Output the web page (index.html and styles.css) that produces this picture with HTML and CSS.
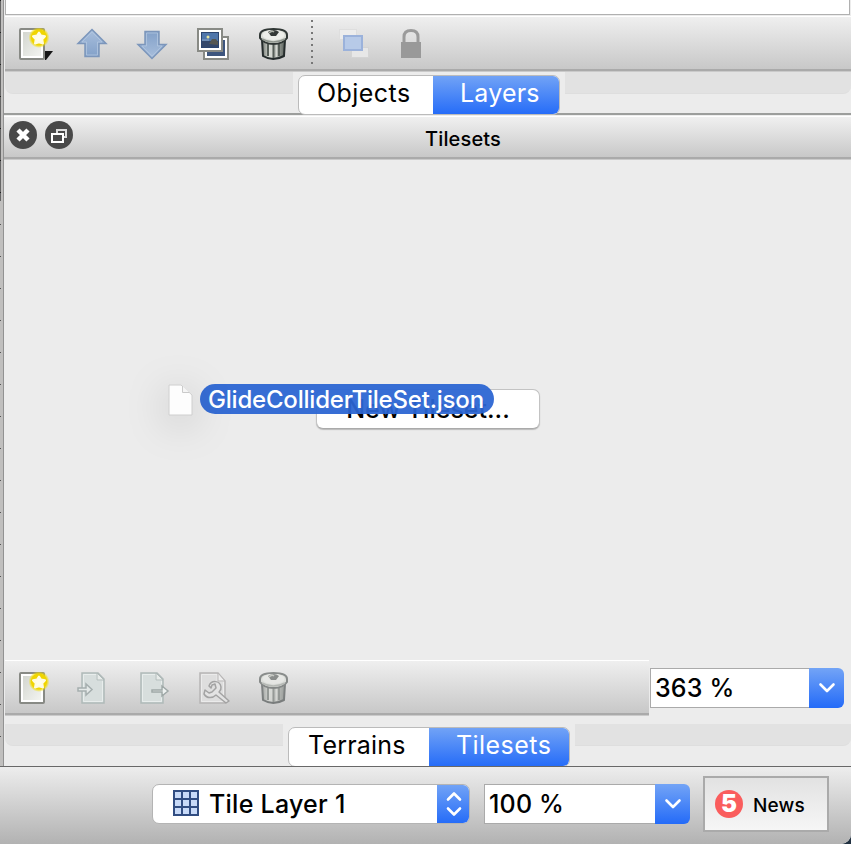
FILE: index.html
```html
<!DOCTYPE html>
<html lang="en">
<head>
<meta charset="utf-8">
<title>Tilesets</title>
<link rel="stylesheet" href="styles.css">
</head>
<body>
<svg width="0" height="0" class="defs">
  <defs>
    <linearGradient id="paper" x1="0" y1="0" x2="1" y2="1"><stop offset="0" stop-color="#cfd2cb"/><stop offset="1" stop-color="#f7f8f5"/></linearGradient>
    <linearGradient id="blue" x1="0" y1="0" x2="0" y2="1"><stop offset="0" stop-color="#a9bfdc"/><stop offset="1" stop-color="#83a1c9"/></linearGradient>
    <linearGradient id="can" x1="0" y1="0" x2="1" y2="0"><stop offset="0" stop-color="#727872"/><stop offset=".35" stop-color="#e2e5df"/><stop offset="1" stop-color="#5d645e"/></linearGradient>
    <radialGradient id="glow"><stop offset=".72" stop-color="#f0d500"/><stop offset="1" stop-color="#f6e400" stop-opacity="0"/></radialGradient>
    <symbol id="new" viewBox="0 0 32 32">
      <rect x="1" y="1" width="24" height="30" rx="1" fill="url(#paper)" stroke="#888a85" stroke-width="2"/>
      <rect x="3" y="3" width="20" height="26" fill="none" stroke="#fff" stroke-width="2"/>
      <circle cx="20" cy="9.500" r="10.500" fill="url(#glow)"/>
      <path d="M20 4.500l2 3 4 .8-2.700 3 .7 4.200-4-1.300-4 1.300.7-4.200-2.700-3 4-.8z" fill="#fffdec" stroke="#fffce0" stroke-width="2" stroke-linejoin="round"/>
    </symbol>
    <symbol id="arrow" viewBox="0 0 32 32">
      <path d="M16 1.500L30 15.500H23V28.500H9V15.500H2z" fill="url(#blue)" stroke="#7c96bb" stroke-width="1.500"/>
      <path d="M16 4L26 14H21.500V27H10.500V14H6z" fill="none" stroke="#b3c6df" stroke-width=".8"/>
    </symbol>
    <symbol id="images" viewBox="0 0 32 32">
      <path d="M7 9H31V31H7z" fill="#fff" stroke="#888a85" stroke-width="2"/>
      <path d="M10 12H28V28H10z" fill="#3e567e"/>
      <rect x="1" y="1" width="24" height="22" fill="#fff" stroke="#888a85" stroke-width="2"/>
      <rect x="4.500" y="4.500" width="17" height="15" fill="#4f76ab" stroke="#2c4570"/>
      <path d="M5 13H21V19H5z" fill="#33476b"/><circle cx="11" cy="9" r="1.500" fill="#e7e6a0"/><path d="M12 16l3-5h4l2 3v3z" fill="#555753"/><path d="M5 12h7" stroke="#8ea5c4"/>
    </symbol>
    <symbol id="trash" viewBox="0 0 32 34">
      <path d="M4 13L5 29Q15 35 26 29L27 13z" fill="url(#can)" stroke="#252c2c" stroke-width="2"/>
      <path d="M10 17v12M15.500 18v13M21 17v12" stroke="#555d57" stroke-width="2"/><path d="M12.500 17v13M18.500 17v13" stroke="#d5d9d2" stroke-width="1.500"/>
      <path d="M2 8Q2 2 15.500 2Q29 2 29 8V11Q25 17 15.500 17Q6 17 2 11z" fill="#d9ddd6" stroke="#303735" stroke-width="2"/>
      <ellipse cx="15.500" cy="8" rx="11" ry="5" fill="#eceee9"/><path d="M4 12Q15 18 27 12" fill="none" stroke="#8f968e" stroke-width="1.500"/>
      <path d="M10 5Q16 1 21 5L18 9H13z" fill="#343a37"/><path d="M11 6q3-3 5-1" fill="none" stroke="#adb2a8" stroke-width="1.500"/>
    </symbol>
    <symbol id="duplicate" viewBox="0 0 32 32">
      <rect x="1.500" y="1.500" width="17" height="10" fill="#ededed" stroke="#dedede"/><rect x="13.500" y="19.500" width="17" height="10" fill="#e7e7e7" stroke="#d4d4d4"/>
      <rect x="6" y="8" width="18" height="14" fill="#b7cae8" stroke="#9bb2db" stroke-width="2"/>
    </symbol>
    <symbol id="lock" viewBox="0 0 22 30"><path d="M4 14V8Q4 1.500 11 1.500T18 8v6" fill="none" stroke="#9b9b9b" stroke-width="3"/><path d="M1 13h20v16H1z" fill="#999"/></symbol>
    <symbol id="doc" viewBox="0 0 24 32"><path d="M1 1H17L23 7V31H1z" fill="#d7dedd" stroke="#b0bab9" stroke-width="1.500"/><path d="M2.500 2.500H16V8H21.500V29.500H2.500z" fill="none" stroke="#e8edec"/><path d="M16 1v7h7z" fill="#e8ecea" stroke="#b0bab9"/></symbol>
  </defs>
</svg>
<div class="window">
  <div class="upper">
    <div class="canvas-edge"><div class="edge-dark"></div><div class="edge-ticks"></div></div>
    <main class="dock">
      <div class="list-end"></div>
      <div class="toolbar layers-tools">
        <svg class="new-icon" width="32" height="32"><use href="#new"/></svg>
        <svg class="up" width="32" height="32"><use href="#arrow"/></svg>
        <svg class="down" width="32" height="32"><use href="#arrow"/></svg>
        <svg class="images" width="32" height="32"><use href="#images"/></svg>
        <svg class="trash" width="32" height="34"><use href="#trash"/></svg>
        <div class="separator"></div>
        <svg class="duplicate" width="32" height="32"><use href="#duplicate"/></svg>
        <svg class="lock" width="22" height="30"><use href="#lock"/></svg>
        <svg class="drop-mark" width="9" height="10"><path d="M0 0H8L1 9H0z" fill="#171717"/></svg>
      </div>
      <nav class="tabs top-tabs">
        <div class="rail left"></div>
        <div class="segments"><div class="tab objects"><span>Objects</span></div><div class="tab active layers"><span>Layers</span></div></div>
        <div class="rail right"></div>
      </nav>
      <header class="title">
        <svg width="66" height="30" viewBox="0 0 66 30">
          <circle cx="15" cy="15" r="14" fill="#494949"/><path d="M10 10l10 10m0-10l-10 10" stroke="#fff" stroke-width="4.500"/>
          <circle cx="51" cy="15" r="14" fill="#494949"/><rect x="49" y="10" width="9" height="7" fill="#494949" stroke="#ddd" stroke-width="2"/><rect x="44" y="14" width="11" height="8" fill="#494949" stroke="#fff" stroke-width="2"/>
        </svg>
        <h1><span>Tilesets</span></h1>
      </header>
      <section class="empty">
        <button class="new-tileset"><span>New Tileset...</span></button>
        <div class="drag">
          <svg width="26" height="32" viewBox="0 0 26 32"><path d="M1 1H13L24 11V31H1z" fill="#fdfdfd" stroke="#cecece"/><path d="M14.500 2v6.500h7" fill="#f5f5f5" stroke="#cacaca"/></svg>
          <div class="filename"><span>GlideColliderTileSet.json</span></div>
        </div>
      </section>
      <div class="tools-row">
        <div class="toolbar tile-tools">
          <svg class="new-icon" width="32" height="32"><use href="#new"/></svg>
          <svg class="import" width="32" height="32" viewBox="0 0 32 32"><use href="#doc" x="4" width="24" height="32"/><path d="M1 16h8v-4l6 5.500-6 5.500v-4H1z" fill="#e4e9e8" stroke="#a5aeae" stroke-width="1.500"/></svg>
          <svg class="export" width="32" height="32" viewBox="0 0 32 32"><use href="#doc" width="24" height="32"/><path d="M12 18h10v-4l6 5-6 5v-4H12z" fill="#eef2f1" stroke="#9fa8a7" stroke-width="1.500"/></svg>
          <svg class="wrench" width="32" height="32" viewBox="0 0 32 32"><path d="M1 1H19L26 9V31H1z" fill="#dedede" stroke="#b7b5b5" stroke-width="1.500"/><path d="M2.500 2.500H18V9H24.500V29.500H2.500z" fill="none" stroke="#ebebeb"/><path d="M19 1v8h7z" fill="#eee" stroke="#b7b5b5"/><path d="M10 14c2-6 11-6 12 1 .4 3-1 4-2 5l10 9-3 2-10-8c-3 3-9 4-12-1l1-4 4 3 3-1 4-4-1-4-3 1-1 3z" fill="#e3e3e3" stroke="#a3a3a3" stroke-width="1.500" stroke-linejoin="round"/></svg>
          <svg class="trash dim" width="32" height="34"><use href="#trash"/></svg>
        </div>
        <div class="combo tileset-zoom"><div class="value"><span>363 %</span></div><div class="combo-button"><svg width="18" height="12" viewBox="0 0 18 12"><path d="M2.500 2.500L9 9l6.500-6.500"/></svg></div></div>
      </div>
      <nav class="tabs bottom-tabs">
        <div class="rail left"></div>
        <div class="segments"><div class="tab terrains"><span>Terrains</span></div><div class="tab active tilesets"><span>Tilesets</span></div></div>
        <div class="rail right"></div>
      </nav>
    </main>
  </div>
  <footer class="status">
    <div class="layer-select">
      <svg class="grid-icon" width="26" height="26"><path d="M0 0h26v26H0z" fill="#314d82"/><path d="M2 2h6v6H2zM10 2h6v6h-6zM18 2h6v6h-6zM2 10h6v6H2zM10 10h6v6h-6zM18 10h6v6h-6zM2 18h6v6H2zM10 18h6v6h-6zM18 18h6v6h-6z" fill="#c8daf8"/></svg>
      <div class="layer-name"><span>Tile Layer 1</span></div>
      <div class="stepper"><svg width="18" height="26" viewBox="0 0 18 26"><path d="M3 8.500L9 2.500l6 6M3 17.500l6 6 6-6"/></svg></div>
    </div>
    <div class="combo map-zoom"><div class="value"><span>100 %</span></div><div class="combo-button"><svg width="18" height="12" viewBox="0 0 18 12"><path d="M2.500 2.500L9 9l6.500-6.500"/></svg></div></div>
    <button class="news"><b class="badge-count">5</b><span>News</span></button>
  </footer>
</div>
</body>
</html>
```
FILE: styles.css
```css
* { box-sizing: border-box; }
body { margin: 0; overflow: hidden; font-family: Inter, "Liberation Sans", sans-serif; color: #000; background: #203040; }
.defs { position: absolute; }
svg { display: block; flex: none; }
span { white-space: nowrap; }
.window { width: 851px; height: 844px; background: #ececec; border-bottom-right-radius: 10px; overflow: hidden; }
.upper { display: flex; height: 766px; }
.canvas-edge { width: 4px; flex: none; background: linear-gradient(90deg, #c0bfbe 3px, #929292 3px); }
.edge-dark { width: 1px; height: 201px; background: repeating-linear-gradient(#666 0 32px, #222 32px 33px); background: linear-gradient(#222 1px, #666 1px) 0 0 / 1px 32px; }
.edge-ticks { width: 1px; height: 565px; background: linear-gradient(transparent 23px, #555 23px 24px, transparent 24px) 0 0 / 1px 32px; }
.dock { width: 847px; display: flex; flex-direction: column; }
.list-end { height: 15px; margin: 0 1px; background: #fff; border: solid #b0b0b0; border-width: 0 1px 1px; }
.toolbar { display: flex; align-items: center; background: linear-gradient(#efefef, #c8c8c8); border-top: 1px solid #fff; border-bottom: 2px solid #aaa; box-shadow: 0 1px #cacaca; }
.layers-tools { height: 55px; margin: 1px 0 1px 1px; padding: 2px 0 0 14px; position: relative; }
.down, .images { margin-left: 28px; }
.up { margin-left: 25px; }
.down { transform: rotate(180deg); }
.images { margin-left: 29px; }
.layers-tools .trash { margin-left: 29px; }
.separator { width: 2px; height: 46px; margin: -2px 0 0 21px; background: repeating-linear-gradient(#777 0 2px, transparent 2px 6px); }
.duplicate { margin-left: 25px; }
.lock { margin-left: 30px; }
.drop-mark { position: absolute; left: 40px; top: 34px; }
.tabs { display: flex; }
.top-tabs { height: 41px; }
.rail { height: 22px; background: #e2e2e2; border-bottom: 1px solid #dedede; }
.rail.left { margin-left: 1px; border-bottom-left-radius: 8px; }
.rail.right { flex: 1; border-bottom-right-radius: 8px; }
.top-tabs .left { width: 288px; }
.segments { position: relative; z-index: 1; display: flex; flex: none; height: 40px; margin: 3px 5px 0; background: #fff; border: 1px solid #bbb; border-radius: 7px; overflow: hidden; font-size: 25px; }
.tab { display: flex; align-items: center; padding-bottom: 4px; }
.tab span { display: block; }
.objects { width: 134px; padding-left: 18px; letter-spacing: .45px; }
.layers { width: 127px; padding-left: 27px; letter-spacing: .2px; }
.active { color: #fff; margin: -1px -1px -1px 0; background: linear-gradient(#73a4f6, #246bf8); }
.title { display: flex; height: 46px; padding: 7px 0 0 4px; background: linear-gradient(#9c9e9c 0 2px, #eee 2px 3px, #fff 3px 4px, #f0f0f0 4px, #c8c8c8); border-bottom: 2px solid #aaa; box-shadow: 0 1px #cacaca; }
.title h1 { margin: 8px 0 0 351px; font-size: 20px; line-height: 22px; font-weight: 500; letter-spacing: .15px; }
.empty { flex: 1; position: relative; }
.new-tileset { position: absolute; left: 312px; top: 230px; width: 224px; height: 40px; border: 1px solid #c3c3c3; border-bottom-color: #aaa; border-radius: 7px; background: #fff; box-shadow: 0 1px 1px #bbb; font: 500 25px Inter, sans-serif; padding: 0; color: #000; }
.drag { position: absolute; display: flex; left: 163px; top: 225px; }
.drag svg { margin-left: 1px; filter: drop-shadow(0 7px 20px #0003); }
.filename { margin-left: 6px; width: 294px; height: 30px; padding-left: 8px; border-radius: 15px; background: rgba(43,101,210,.94); color: #fff; font-size: 24px; line-height: 31px; font-weight: 500; letter-spacing: -.2px; }
.tools-row { display: flex; height: 56px; }
.tile-tools { width: 644px; height: 55px; margin-left: 1px; padding: 2px 0 0 14px; }
.import { margin-left: 26px; }
.export { margin-left: 31px; }
.wrench { margin-left: 27px; }
.tile-tools .trash { margin-left: 27px; }
.dim { opacity: .5; }
.combo { display: flex; height: 40px; font-size: 25px; font-weight: 500; }
.value { flex: 1; background: #fff; border: 1px solid #aaa; border-right: 0; padding-left: 4px; line-height: 38px; letter-spacing: .2px; }
.combo-button, .stepper { width: 35px; display: flex; align-items: center; justify-content: center; background: linear-gradient(#73a4f6, #246bf8); border-radius: 0 6px 6px 0; }
.combo-button svg path, .stepper path { fill: none; stroke: #fff; stroke-width: 2.6; stroke-linecap: round; stroke-linejoin: round; }
.tileset-zoom { width: 194px; margin: 8px 0 0 1px; }
.bottom-tabs { height: 50px; padding-top: 8px; }
.bottom-tabs .left { width: 278px; }
.terrains { width: 140px; padding-left: 19px; letter-spacing: .2px; }
.tilesets { width: 141px; padding-left: 27px; letter-spacing: .45px; }
.status { position: relative; z-index: 2; height: 78px; display: flex; padding-left: 152px; background: linear-gradient(#ededed, #b2b2b2); border-top: 1px solid #686868; }
.layer-select { width: 318px; height: 40px; margin-top: 17px; display: flex; background: #fff; border: 1px solid #b4b4b4; border-radius: 7px; overflow: hidden; }
.grid-icon { margin: 5px 0 0 20px; }
.layer-name { margin-left: 10px; font-size: 25px; line-height: 38px; font-weight: 500; flex: 1; letter-spacing: .25px; }
.stepper { width: 33px; margin: -1px -1px -1px 0; }
.map-zoom { width: 206px; margin: 17px 0 0 14px; }
.news { display: flex; align-items: center; width: 126px; height: 56px; margin: 9px 0 0 13px; padding: 0 0 0 10px; border: 2px solid #aaa; background: linear-gradient(#e2e2e2, #f6f6f6); font: 500 19px Inter, sans-serif; color: #000; }
.badge-count { width: 28px; height: 28px; border-radius: 50%; background: #fa5d5d; color: #fff; font: 900 24px/28px Inter, sans-serif; text-align: center; }
.news span { margin: 2px 0 0 10px; letter-spacing: .2px; }
```
